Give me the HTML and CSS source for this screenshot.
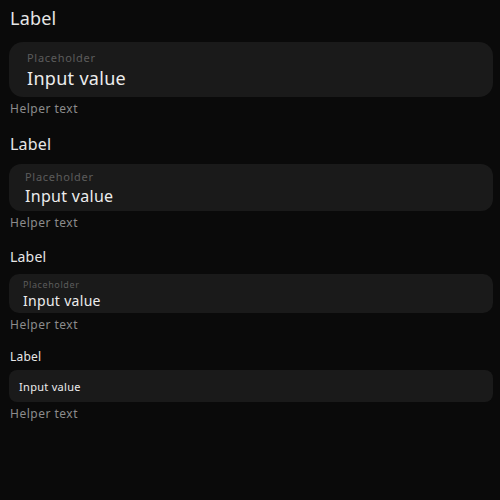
FILE: index.html
```html
<!DOCTYPE html>
<html lang="en">
<head>
<meta charset="utf-8">
<title>Text fields</title>
<link rel="stylesheet" href="styles.css">
</head>
<body>
<main class="page">
  <section class="group xl">
    <div class="label">Label</div>
    <div class="field">
      <div class="placeholder">Placeholder</div>
      <div class="value">Input value</div>
    </div>
    <div class="helper">Helper text</div>
  </section>
  <section class="group lg">
    <div class="label">Label</div>
    <div class="field">
      <div class="placeholder">Placeholder</div>
      <div class="value">Input value</div>
    </div>
    <div class="helper">Helper text</div>
  </section>
  <section class="group md">
    <div class="label">Label</div>
    <div class="field">
      <div class="placeholder">Placeholder</div>
      <div class="value">Input value</div>
    </div>
    <div class="helper">Helper text</div>
  </section>
  <section class="group sm">
    <div class="label">Label</div>
    <div class="field">
      <div class="value">Input value</div>
    </div>
    <div class="helper">Helper text</div>
  </section>
</main>
</body>
</html>
```
FILE: styles.css
```css
html, body {
  margin: 0;
  padding: 0;
  background: #0a0a0a;
  height: 100%;
}
body {
  font-family: "Noto Sans", "Open Sans", sans-serif;
  color: #e8e8e8;
}
.page {
  padding: 6px 7px 0 9px;
  display: flex;
  flex-direction: column;
}
.group {
  display: flex;
  flex-direction: column;
}
.label {
  color: #e6e6e6;
  padding-left: 1px;
  letter-spacing: 0.2px;
}
.field {
  background: #1a1a1a;
  display: flex;
  flex-direction: column;
}
.placeholder {
  color: #5c5c5c;
  letter-spacing: 0.7px;
}
.value {
  color: #ececec;
  letter-spacing: 0.3px;
}
.helper {
  font-size: 12px;
  line-height: 16px;
  color: #8c8c8c;
  padding-left: 1px;
  letter-spacing: 0.5px;
}

/* XL */
.xl .label { font-size: 18px; line-height: 24px; margin-bottom: 12px; }
.xl .field { height: 55px; box-sizing: border-box; padding: 9px 18px 0; border-radius: 14px; }
.xl .placeholder { font-size: 11px; line-height: 14px; }
.xl .value { font-size: 18px; line-height: 24px; margin-top: 1px; }
.xl .helper { margin-top: 4px; }

/* LG */
.lg { margin-top: 17px; }
.lg .label { font-size: 16px; line-height: 20px; margin-bottom: 10px; }
.lg .field { height: 47px; box-sizing: border-box; padding: 6px 16px 0; border-radius: 12px; }
.lg .placeholder { font-size: 11px; line-height: 14px; }
.lg .value { font-size: 16px; line-height: 20px; margin-top: 2px; }
.lg .helper { margin-top: 4px; }

/* MD */
.md { margin-top: 17px; }
.md .label { font-size: 14px; line-height: 18px; margin-bottom: 8px; }
.md .field { height: 39px; box-sizing: border-box; padding: 5px 14px 0; border-radius: 10px; }
.md .placeholder { font-size: 9px; line-height: 12px; letter-spacing: 0.6px; }
.md .value { font-size: 14px; line-height: 18px; margin-top: 1px; }
.md .helper { margin-top: 4px; }

/* SM */
.sm { margin-top: 16px; }
.sm .label { font-size: 12px; line-height: 16px; margin-bottom: 5px; }
.sm .field { height: 32px; box-sizing: border-box; padding: 10px 10px 0; border-radius: 8px; }
.sm .value { font-size: 11px; line-height: 14px; }
.sm .helper { margin-top: 4px; }
```
